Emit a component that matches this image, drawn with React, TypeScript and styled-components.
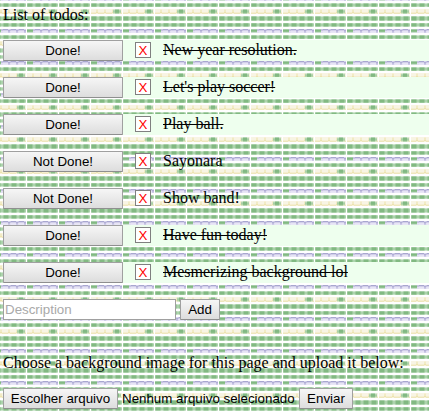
import React from "react";
import styled, { createGlobalStyle } from "styled-components";

// 32px woven tile. Each band is a list of pixel rows; a row is a list of [x, width, colour].
type Run = [number, number, string];

const weave = (light: string, mid: string, dark: string): Run[] => [
  [0, 31, light],
  ...[0, 8, 16, 24].flatMap((x): Run[] => [
    [x, 6, mid],
    [x + 1, 4, dark],
  ]),
];
const greenEdge = weave("#cfe6cf", "#b8d9b8", "#a6cfa6");
const greenCore = weave("#acd3ac", "#98c798", "#82b982");
const greenFade = weave("#c4e0c4", "#aad2aa", "#96c696");

const cream = (base: string, fleck: string, knot: string, core: string): Run[] => [
  [0, 31, base],
  [5, 2, fleck],
  [13, 2, fleck],
  [21, 2, fleck],
  [22, 8, knot],
  [24, 4, core],
];
const purple = (base: string, arc: string, gap: string, knot: string): Run[] => [
  [0, 31, base],
  [8, 5, arc],
  [16, 5, arc],
  [24, 5, arc],
  [13, 2, gap],
  [21, 2, gap],
  [29, 2, gap],
  [0, 6, knot],
];

const tile: Record<number, Run[]> = {
  0: purple("#e3e0f3", "#e9e7f6", "#cfcce8", "#c9dfce"),
  3: greenEdge,
  4: greenCore,
  5: greenCore,
  6: greenFade,
  9: cream("#f8f4e4", "#f7f0d5", "#dce9d2", "#b0d4b0"),
  10: cream("#f8f4e4", "#f1ebc5", "#b5d5b0", "#82b982"),
  11: cream("#f8f4e4", "#f1ebc5", "#a8cfa6", "#82b982"),
  12: cream("#f5eed0", "#ece3af", "#b5d5a9", "#8abd87"),
  13: cream("#efe7bd", "#f7f1da", "#dce7c7", "#b6d6b0"),
  16: greenEdge,
  17: greenCore,
  18: greenCore,
  19: greenCore,
  20: greenEdge,
  23: greenFade,
  24: greenCore,
  25: greenCore,
  26: greenEdge,
  29: purple("#c6c3e1", "#a9a7d0", "#d6d4ec", "#a6cda9"),
  30: purple("#c6c3e1", "#d2cfe9", "#b0add5", "#82b982"),
  31: purple("#e3e0f3", "#e6e3f5", "#c0bddf", "#8fc18f"),
};

const rects = Object.entries(tile)
  .flatMap(([y, runs]) =>
    runs.map(([x, w, c]) => `<rect x="${x}" y="${y}" width="${w}" height="1" fill="${c}"/>`)
  )
  .join("");
const weaveUrl = `data:image/svg+xml,${encodeURIComponent(
  `<svg xmlns="http://www.w3.org/2000/svg" width="32" height="32" shape-rendering="crispEdges"><rect width="32" height="32" fill="#fff"/>${rects}<rect x="31" width="1" height="32" fill="#fff"/></svg>`
)}`;

const GlobalStyle = createGlobalStyle`
  body {
    margin: 0;
    background: #fff url("${weaveUrl}") -5px 0;
    color: #000;
    font: 16px/18px "Liberation Serif", serif;
    overflow: hidden;
  }
`;

const Page = styled.main`
  box-sizing: border-box;
  height: 413px;
  padding: 6px 0 0 3px;
`;

const Line = styled.p`
  margin: 0;
  white-space: nowrap;
`;

const TodoList = styled.div`
  display: grid;
  gap: 16px;
  margin-top: 16px;
`;

const Row = styled.div<{ $done: boolean }>`
  display: flex;
  align-items: flex-end;
  height: 21px;
  background: ${(p) => (p.$done ? "#eeffee" : "transparent")};
`;

const Button = styled.button<{ $width: number }>`
  box-sizing: border-box;
  flex: none;
  width: ${(p) => p.$width}px;
  height: 21px;
  margin: 0;
  padding: 0;
  border: 1px solid #a0a0a0;
  border-bottom-color: #8f8f8f;
  border-radius: 1px;
  background: linear-gradient(#f6f6f6, #dddddd);
  color: #000;
  font: 13.333px/18px "Liberation Sans", Arial, sans-serif;
`;

const Remove = styled.button`
  box-sizing: border-box;
  width: 16px;
  height: 16px;
  margin: 0 12px 3px;
  padding: 2px 0 0;
  border: 1px solid #808080;
  background: #fff;
  color: #f00;
  font: 13.333px/12px "Liberation Sans", Arial, sans-serif;
`;

const Label = styled.span<{ $done: boolean }>`
  height: 20px;
  line-height: 18px;
  text-decoration: ${(p) => (p.$done ? "line-through" : "none")};
`;

const AddForm = styled.form`
  display: flex;
  gap: 4px;
  margin: 16px 0 34px;
`;

const Field = styled.input`
  box-sizing: border-box;
  width: 173px;
  height: 21px;
  margin: 0;
  padding: 1px;
  border: 1px solid #a0a0a0;
  background: #fff;
  font: 13.333px "Liberation Sans", Arial, sans-serif;
  &::placeholder {
    color: #a9a9a9;
  }
`;

const UploadForm = styled.form`
  display: flex;
  margin-top: 16px;
`;

const FileName = styled.span`
  box-sizing: border-box;
  width: 181px;
  padding-left: 4px;
  white-space: nowrap;
  font: 13.333px/21px "Liberation Sans", Arial, sans-serif;
`;

const todos = [
  { text: "New year resolution.", done: true },
  { text: "Let's play soccer!", done: true },
  { text: "Play ball.", done: true },
  { text: "Sayonara", done: false },
  { text: "Show band!", done: false },
  { text: "Have fun today!", done: true },
  { text: "Mesmerizing background lol", done: true },
];

export default function App() {
  return (
    <Page>
      <GlobalStyle />
      <Line>List of todos:</Line>
      <TodoList>
        {todos.map(({ text, done }) => (
          <Row key={text} $done={done}>
            <Button $width={120}>{done ? "Done!" : "Not Done!"}</Button>
            <Remove>X</Remove>
            <Label $done={done}>{text}</Label>
          </Row>
        ))}
      </TodoList>
      <AddForm>
        <Field placeholder="Description" />
        <Button type="button" $width={40}>Add</Button>
      </AddForm>
      <Line>Choose a background image for this page and upload it below:</Line>
      <UploadForm>
        <Button type="button" $width={115}>Escolher arquivo</Button>
        <FileName>Nenhum arquivo selecionado</FileName>
        <Button type="button" $width={54}>Enviar</Button>
      </UploadForm>
    </Page>
  );
}
